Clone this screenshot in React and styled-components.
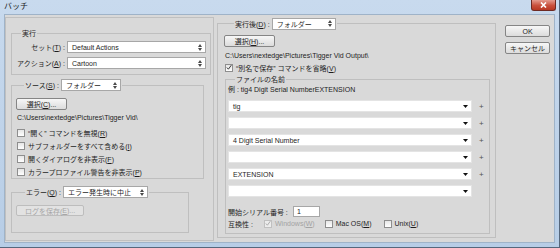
import React from 'react';
import styled, { createGlobalStyle } from 'styled-components';

const GlobalStyle = createGlobalStyle`
  html, body {
    margin: 0;
    padding: 0;
    background: #ffffff;
  }
  body {
    font-family: "Liberation Sans", "Noto Sans CJK JP", sans-serif;
    font-size: 7px;
    color: #1e1e1e;
  }
  * { box-sizing: border-box; }
`;

const Window = styled.div`
  width: 560px;
  height: 248px;
  display: flex;
  flex-direction: column;
  background: linear-gradient(#c8daee, #b7cde6);
  border-right: 1px solid #56677c;
  border-bottom: 1px solid #56677c;
  padding: 0 4px 4px 4px;
`;

const TitleBar = styled.div`
  height: 14px;
  display: flex;
  align-items: flex-start;
  justify-content: space-between;
`;

const Title = styled.span`
  font-size: 8px;
  line-height: 14px;
  color: #1c1c1c;
`;

const CloseButton = styled.div`
  width: 25px;
  height: 11px;
  margin-right: -1px;
  border: 1px solid #6e2a23;
  border-top: none;
  border-radius: 0 0 3px 3px;
  background: linear-gradient(#e49b8e, #c9503c 55%, #b83823);
  display: flex;
  align-items: center;
  justify-content: center;
`;

const Body = styled.div`
  flex: 1;
  display: flex;
  align-items: flex-start;
  background: #d9d9d9;
  border: 1px solid #9fb3c8;
`;

const LeftFrame = styled.div`
  width: 209px;
  height: 224px;
  margin-top: 2px;
  border: 1px solid #c0c0c0;
  padding: 10px 0 0 5px;
  display: flex;
  flex-direction: column;
`;

const Group = styled.fieldset`
  margin: ${p => p.$margin || '0'};
  padding: ${p => p.$pad};
  width: ${p => p.$w}px;
  min-width: 0;
  border: 1px solid #bfbfbf;
  display: flex;
  flex-direction: column;
`;

const Legend = styled.legend`
  padding: 0 1px;
  margin-left: ${p => p.$ml}px;
`;

const LegendInner = styled.div`
  display: flex;
  align-items: center;
  gap: 2px;
  height: ${p => p.$h || 12}px;
`;

const FormGrid = styled.div`
  display: grid;
  grid-template-columns: 51px 1fr;
  column-gap: 2px;
  row-gap: 4px;
  align-items: center;
`;

const Label = styled.span`
  white-space: nowrap;
  text-align: ${p => p.$align || 'left'};
  width: ${p => (p.$w ? `${p.$w}px` : 'auto')};
  color: ${p => (p.$disabled ? '#a3a3a3' : 'inherit')};
`;

const SelectBox = styled.div`
  width: ${p => (p.$w ? `${p.$w}px` : 'auto')};
  height: 12px;
  background: #ffffff;
  border: 1px solid #a7a7a7;
  display: flex;
  align-items: center;
  justify-content: space-between;
  padding: 0 3px 0 4px;
  white-space: nowrap;
`;

const Button = styled.div`
  width: ${p => p.$w}px;
  height: ${p => p.$h || 12}px;
  border: 1px solid ${p => (p.$disabled ? '#bdbdbd' : '#858585')};
  border-radius: 2px;
  background: ${p => (p.$disabled ? '#e2e2e2' : 'linear-gradient(#f7f7f7, #e9e9e9 50%, #dcdcdc)')};
  color: ${p => (p.$disabled ? '#a6a6a6' : 'inherit')};
  display: flex;
  align-items: center;
  justify-content: center;
  white-space: nowrap;
`;

const PathText = styled.div`
  height: 10px;
  line-height: 10px;
  margin-top: ${p => p.$mt}px;
  padding-left: 1px;
  white-space: nowrap;
`;

const CheckRow = styled.div`
  height: ${p => p.$h || 13}px;
  display: flex;
  align-items: center;
  gap: 3px;
  padding-left: 1px;
  white-space: nowrap;
`;

const Box = styled.span`
  width: 8px;
  height: 8px;
  flex: none;
  border: 1px solid ${p => (p.$disabled ? '#c0c0c0' : '#8e8e8e')};
  background: ${p => (p.$disabled ? '#ececec' : 'linear-gradient(#e6e6e6, #ffffff)')};
  display: flex;
  align-items: center;
  justify-content: center;
`;

const RightGroup = styled(Group)`
  margin: 3px 0 0 3px;
`;

const ExampleLine = styled.div`
  height: 10px;
  line-height: 10px;
  white-space: nowrap;
`;

const ComboList = styled.div`
  display: flex;
  flex-direction: column;
  gap: 5px;
  margin-top: 5px;
`;

const ComboRow = styled.div`
  display: flex;
  align-items: center;
  gap: 7px;
`;

const Combo = styled.div`
  width: 244px;
  height: 12px;
  background: #ffffff;
  border: 1px solid #e4e4e4;
  display: flex;
  align-items: center;
  justify-content: space-between;
  padding: 0 3px 0 4px;
  white-space: nowrap;
`;

const Plus = styled.span`
  font-size: 8px;
  color: #555555;
  visibility: ${p => (p.$hidden ? 'hidden' : 'visible')};
`;

const FieldRow = styled.div`
  display: flex;
  align-items: center;
  height: ${p => p.$h}px;
  margin-top: ${p => p.$mt || 0}px;
  gap: ${p => p.$gap || 0}px;
`;

const NumberInput = styled.div`
  width: 27px;
  height: 11px;
  background: #ffffff;
  border: 1px solid #a7a7a7;
  padding-left: 3px;
  line-height: 9px;
`;

const CompatItem = styled.div`
  display: flex;
  align-items: center;
  gap: 3px;
  margin-right: ${p => p.$mr || 0}px;
  color: ${p => (p.$disabled ? '#a3a3a3' : 'inherit')};
`;

const ButtonColumn = styled.div`
  display: flex;
  flex-direction: column;
  gap: 5px;
  margin: 10px 0 0 9px;
`;

const UpDown = () => (
  <svg width="4" height="7" viewBox="0 0 4 7">
    <path d="M0 3 L2 0 L4 3 Z M0 4 L2 7 L4 4 Z" fill="#4a4a4a" />
  </svg>
);

const DownArrow = () => (
  <svg width="5" height="3" viewBox="0 0 5 3">
    <path d="M0 0 L5 0 L2.5 3 Z" fill="#111111" />
  </svg>
);

const Tick = ({ color }) => (
  <svg width="7" height="7" viewBox="0 0 7 7">
    <path d="M1 3.5 L2.8 5.5 L6.2 0.8" stroke={color} strokeWidth="1.1" fill="none" />
  </svg>
);

const Select = ({ w, children }) => (
  <SelectBox $w={w}>
    <span>{children}</span>
    <UpDown />
  </SelectBox>
);

const Check = ({ checked, disabled, children, h }) => (
  <CheckRow $h={h}>
    <Box $disabled={disabled}>{checked && <Tick color={disabled ? '#a8a8a8' : '#2b2b2b'} />}</Box>
    <Label $disabled={disabled}>{children}</Label>
  </CheckRow>
);

const sourceOptions = [
  <>“開く” コマンドを無視(<u>R</u>)</>,
  <>サブフォルダーをすべて含める(<u>I</u>)</>,
  <>開くダイアログを非表示(<u>F</u>)</>,
  <>カラープロファイル警告を非表示(<u>P</u>)</>,
];

const nameParts = ['tig', '', '4 Digit Serial Number', '', 'EXTENSION', ''];

export default function App() {
  return (
    <>
      <GlobalStyle />
      <Window>
        <TitleBar>
          <Title>バッチ</Title>
          <CloseButton>
            <svg width="7" height="6" viewBox="0 0 7 6">
              <path d="M1 0.5 L6 5.5 M6 0.5 L1 5.5" stroke="#ffffff" strokeWidth="1.6" />
            </svg>
          </CloseButton>
        </TitleBar>
        <Body>
          <LeftFrame>
            <Group $w={200} $pad="3px 4px 5px 2px">
              <Legend $ml={7}>
                <LegendInner $h={10}>実行</LegendInner>
              </Legend>
              <FormGrid>
                <Label $align="right">セット(<u>T</u>) :</Label>
                <Select>Default Actions</Select>
                <Label $align="right">アクション(<u>A</u>) :</Label>
                <Select>Cartoon</Select>
              </FormGrid>
            </Group>

            <Group $w={193} $margin="4px 0 0 0" $pad="7px 4px 0 4px">
              <Legend $ml={8}>
                <LegendInner>
                  <Label>ソース(<u>S</u>) :</Label>
                  <Select w={60}>フォルダー</Select>
                </LegendInner>
              </Legend>
              <Button $w={51}>選択(<u>C</u>)...</Button>
              <PathText $mt={3}>C:\Users\nextedge\Pictures\Tigger Vid\</PathText>
              <div style={{ marginTop: 3 }}>
                {sourceOptions.map((text, index) => (
                  <Check key={index}>{text}</Check>
                ))}
              </div>
            </Group>

            <Group $w={178} $margin="7px 0 0 0" $pad="7px 4px 16px 4px">
              <Legend $ml={9}>
                <LegendInner>
                  <Label>エラー(<u>Q</u>) :</Label>
                  <Select w={85}>エラー発生時に中止</Select>
                </LegendInner>
              </Legend>
              <Button $w={68} $h={11} $disabled>ログを保存(<u>E</u>)...</Button>
            </Group>
          </LeftFrame>

          <RightGroup $w={279} $pad="6px 5px 3px 6px">
            <Legend $ml={10}>
              <LegendInner $h={11}>
                <Label>実行後(<u>D</u>) :</Label>
                <Select w={64}>フォルダー</Select>
              </LegendInner>
            </Legend>
            <Button $w={51}>選択(<u>H</u>)...</Button>
            <PathText $mt={4}>C:\Users\nextedge\Pictures\Tigger Vid Output\</PathText>
            <Check checked h={13}>“別名で保存” コマンドを省略(<u>V</u>)</Check>

            <Group $w={265} $margin="0 0 0 1px" $pad="1px 2px 3px 2px">
              <Legend $ml={7}>
                <LegendInner $h={10}>ファイルの名前</LegendInner>
              </Legend>
              <ExampleLine>例 : tig4 Digit Serial NumberEXTENSION</ExampleLine>
              <ComboList>
                {nameParts.map((part, index) => (
                  <ComboRow key={index}>
                    <Combo>
                      <span>{part}</span>
                      <DownArrow />
                    </Combo>
                    <Plus $hidden={index === nameParts.length - 1}>+</Plus>
                  </ComboRow>
                ))}
              </ComboList>
              <FieldRow $h={11} $mt={9}>
                <Label $w={65}>開始シリアル番号 :</Label>
                <NumberInput>1</NumberInput>
              </FieldRow>
              <FieldRow $h={13}>
                <Label $w={36}>互換性 :</Label>
                <CompatItem $disabled $mr={10}>
                  <Box $disabled><Tick color="#a8a8a8" /></Box>
                  <span>Windows(<u>W</u>)</span>
                </CompatItem>
                <CompatItem $mr={12}>
                  <Box />
                  <span>Mac OS(<u>M</u>)</span>
                </CompatItem>
                <CompatItem>
                  <Box />
                  <span>Unix(<u>U</u>)</span>
                </CompatItem>
              </FieldRow>
            </Group>
          </RightGroup>

          <ButtonColumn>
            <Button $w={45}>OK</Button>
            <Button $w={45}>キャンセル</Button>
          </ButtonColumn>
        </Body>
      </Window>
    </>
  );
}
